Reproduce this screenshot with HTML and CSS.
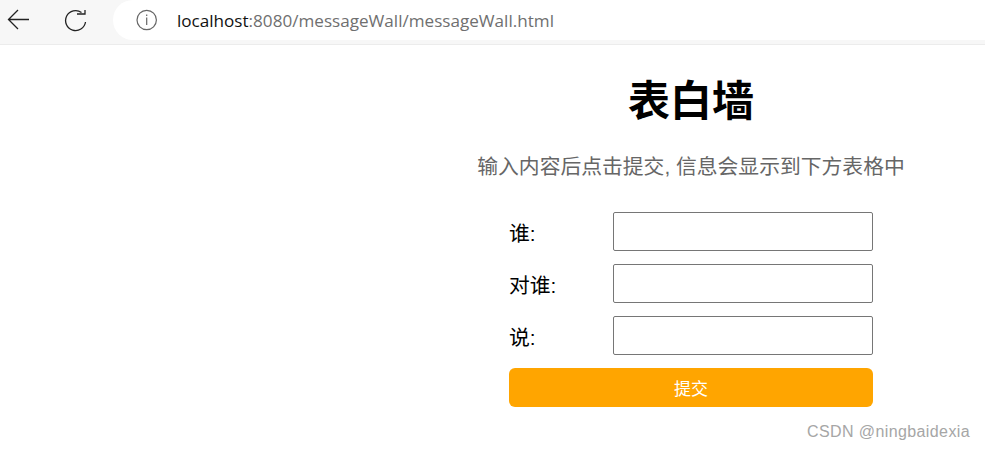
FILE: index.html
```html
<!DOCTYPE html>
<html lang="zh">
<head>
  <meta charset="UTF-8" />
  <title>表白墙</title>
  <link rel="stylesheet" href="styles.css">
</head>
<body>
  <div class="toolbar">
    <svg class="nav-icon back" width="24" height="24" viewBox="0 0 24 24">
      <path d="M22 11.500H1.500M11 2l-9.500 9.500L11 21" fill="none" stroke="#222" stroke-width="1.300"/>
    </svg>
    <svg class="nav-icon reload" width="24" height="24" viewBox="0 0 24 24">
      <path d="M17.500 4.500A10 10 0 1 0 21.500 14" fill="none" stroke="#222" stroke-width="1.300"/>
      <path d="M21 2v4h-8" fill="none" stroke="#222" stroke-width="1.300"/>
    </svg>
    <div class="address">
      <svg class="info" width="22" height="22" viewBox="0 0 22 22">
        <circle cx="10.700" cy="11" r="9.700" fill="none" stroke="#666" stroke-width="1.200"/>
        <path d="M10.700 8.500v7.500M10.700 5.500v1.600" fill="none" stroke="#666" stroke-width="1.200"/>
      </svg>
      <span class="url"><span class="host">localhost</span>:8080/messageWall/messageWall.html</span>
    </div>
  </div>

  <div class="container">
    <h1>表白墙</h1>
    <p class="tip">输入内容后点击提交, 信息会显示到下方表格中</p>
    <div class="row">
      <span class="label">谁:</span>
      <input type="text">
    </div>
    <div class="row">
      <span class="label">对谁:</span>
      <input type="text">
    </div>
    <div class="row">
      <span class="label">说:</span>
      <input type="text">
    </div>
    <div class="row">
      <button>提交</button>
    </div>
  </div>

  <div class="watermark">CSDN @ningbaidexia</div>
</body>
</html>
```

FILE: styles.css
```css
* {
  margin: 0;
  padding: 0;
  box-sizing: border-box;
}
html, body {
  height: 451px;
  overflow: hidden;
}
body {
  font-family: "Liberation Sans", "Noto Sans CJK SC", sans-serif;
  background: white;
}
.toolbar {
  display: flex;
  align-items: center;
  height: 45px;
  background: #f7f7f7;
  border-bottom: 1px solid #ececec;
  padding: 0 0 4px 7px;
}
.nav-icon {
  flex: none;
}
.reload {
  margin-left: 33px;
}
.address {
  display: flex;
  align-items: center;
  flex: 1;
  height: 40px;
  margin-left: 25px;
  padding-left: 23px;
  background: white;
  border-radius: 20px 0 0 20px;
}
.url {
  margin-left: 19px;
  font-family: "Open Sans", sans-serif;
  font-size: 17.100px;
  color: #6f6f6f;
}
.host {
  color: #111;
}
.container {
  width: 440px;
  margin-left: 471px;
}
h1 {
  margin-top: 29px;
  font-size: 42px;
  line-height: 56px;
  text-align: center;
  color: black;
}
.tip {
  margin-top: 23px;
  font-size: 20.800px;
  line-height: 28px;
  text-align: center;
  white-space: nowrap;
  color: #666;
}
.row {
  display: flex;
  align-items: center;
  justify-content: space-between;
  width: 364px;
  height: 39px;
  margin: 0 auto 13px;
}
.tip + .row {
  margin-top: 31px;
}
.label {
  font-size: 20.800px;
}
input {
  width: 260px;
  height: 39px;
  background: white;
  border: 1px solid #767676;
  border-radius: 2px;
}
button {
  width: 100%;
  height: 39px;
  background: orange;
  color: white;
  border: none;
  border-radius: 6px;
  font-family: inherit;
  font-size: 17px;
}
.watermark {
  position: absolute;
  top: 423px;
  left: 807px;
  font-family: "Liberation Sans", sans-serif;
  font-size: 16px;
  letter-spacing: 0.4px;
  color: #a6a6a6;
}
```
